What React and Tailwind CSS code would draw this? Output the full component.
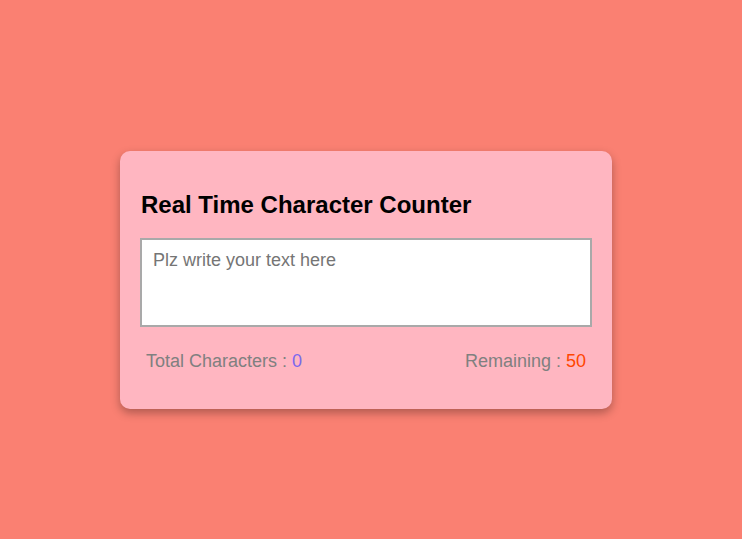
export default function App() {
  return (
    <div className="min-h-[539px] w-full bg-[#fa8072] pt-[151px] pl-[120px]" style={{ fontFamily: '"Liberation Sans", Arial, sans-serif' }}>
      <div className="w-[492px] h-[258px] bg-[#ffb6c1] rounded-[10px] px-[20px] pt-[40px] shadow-[0_4px_10px_rgba(0,0,0,0.3)] flex flex-col">
        <h2 className="text-[24px] leading-[28px] font-bold text-black m-0 pl-[1px] h-[28px] flex items-center">Real Time Character Counter</h2>
        <textarea
          className="mt-[19px] w-[452px] h-[89px] border-2 border-[#a9a9a9] bg-white px-[11px] pt-[10px] pb-[6px] text-[18px] leading-[21px] text-black placeholder:text-[#757575] resize-none outline-none"
          placeholder="Plz write your text here"
        />
        <div className="mt-[24px] flex justify-between px-[6px] text-[18px] leading-[21px] text-[#808080]">
          <span>Total Characters : <span className="text-[#7b68ee]">0</span></span>
          <span>Remaining : <span className="text-[#ff4500]">50</span></span>
        </div>
      </div>
    </div>
  );
}
